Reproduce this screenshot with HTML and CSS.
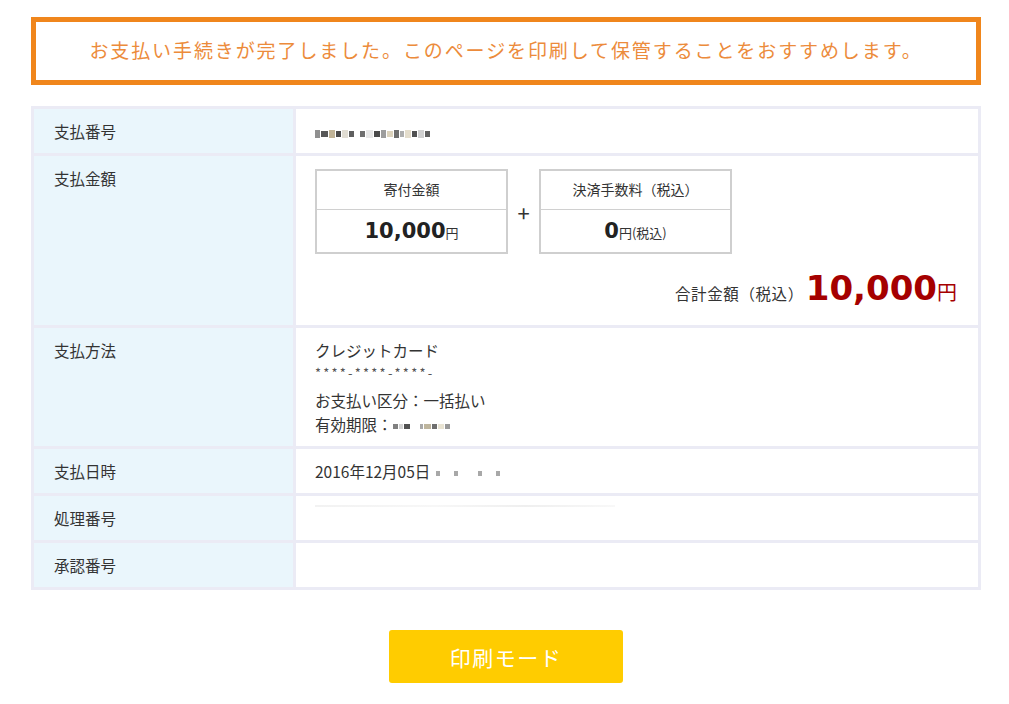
FILE: index.html
```html
<!DOCTYPE html>
<html lang="ja">
<head>
<meta charset="utf-8">
<title>お支払い完了</title>
<link rel="stylesheet" href="styles.css">
</head>
<body>
<main class="page">
  <p class="notice">お支払い手続きが完了しました。このページを印刷して保管することをおすすめします。</p>

  <div class="detail">
    <div class="label">支払番号</div>
    <div class="value">
      <span class="masked">
        <i style="background:#7d7d7d"></i><i style="background:#3a3a3a;width:7px"></i><i style="background:#b7a785;width:6px"></i><i style="background:#2c2c2c"></i><i style="background:#dcd8cc;width:6px"></i><i style="background:#444"></i><i style="background:#fff;width:4px"></i><i style="background:#555"></i><i style="background:#e3e3e3;width:7px"></i><i style="background:#2a2a2a;width:6px"></i><i style="background:#8c8c8c"></i><i style="background:#d6ccb2;width:6px"></i><i style="background:#555"></i><i style="background:#a0a0a0;width:4px"></i><i style="background:#e0d8c4;width:6px"></i><i style="background:#333"></i><i style="background:#c8c8c8;width:6px"></i><i style="background:#444"></i>
      </span>
    </div>

    <div class="label">支払金額</div>
    <div class="value">
      <div class="breakdown">
        <div class="amount-box">
          <div class="amount-head">寄付金額</div>
          <div class="amount-body"><b class="num">10,000</b><span class="yen">円</span></div>
        </div>
        <span class="plus">+</span>
        <div class="amount-box">
          <div class="amount-head">決済手数料（税込）</div>
          <div class="amount-body"><b class="num">0</b><span class="yen">円(税込)</span></div>
        </div>
      </div>
      <div class="total">
        <span class="total-label">合計金額（税込）</span><b class="total-num">10,000</b><span class="total-yen">円</span>
      </div>
    </div>

    <div class="label">支払方法</div>
    <div class="value method">
      <div>クレジットカード</div>
      <div class="card-no">****-****-****-</div>
      <div class="gap">お支払い区分：一括払い</div>
      <div>有効期限：<span class="masked small"><i style="background:#6a6a6a"></i><i style="background:#ccc;width:4px"></i><i style="background:#333;width:6px"></i><i style="background:#fff;width:8px"></i><i style="background:#999;width:3px"></i><i style="background:#b3a98c;width:7px"></i><i style="background:#555"></i><i style="background:#e6e0cc;width:6px"></i><i style="background:#888"></i></span></div>
    </div>

    <div class="label">支払日時</div>
    <div class="value">2016年12月05日 <span class="masked small dots"><i></i><i></i><i></i><i></i></span></div>

    <div class="label">処理番号</div>
    <div class="value"><span class="faint"></span></div>

    <div class="label">承認番号</div>
    <div class="value"></div>
  </div>

  <div class="actions">
    <button class="print-btn" type="button">印刷モード</button>
  </div>
</main>
</body>
</html>
```

FILE: styles.css
```css
* {
  box-sizing: border-box;
}

body {
  margin: 0;
  background: #fff;
  color: #333;
  font-family: "Noto Sans CJK JP", "Noto Sans", sans-serif;
}

.page {
  width: 950px;
  margin-left: 31px;
  padding-top: 17px;
}

/* completion message */
.notice {
  margin: 0;
  height: 68px;
  border: 5px solid #f0861c;
  color: #ec8b3b;
  font-size: 19px;
  letter-spacing: 1.9px;
  line-height: 56px;
  text-align: center;
}

/* payment detail table */
.detail {
  margin-top: 21px;
  display: grid;
  grid-template-columns: 259px 1fr;
  gap: 3px;
  padding: 3px;
  background: #ebebf5;
}

.label {
  background: #eaf6fc;
  padding: 10px 20px;
  font-size: 15.5px;
  line-height: 24px;
}

.value {
  background: #fff;
  padding: 10px 19px;
  font-size: 15.5px;
  line-height: 24px;
  min-height: 44px;
}

.masked {
  display: inline-flex;
  align-items: center;
  height: 10px;
  vertical-align: middle;
  opacity: 0.85;
}

.masked i {
  display: block;
  width: 5px;
  height: 6px;
  margin-right: 1px;
}

.masked i:nth-child(odd) {
  height: 8px;
}

.masked.small i {
  height: 5px;
}

.dots {
  margin-left: 2px;
}

.dots i {
  width: 4px;
  height: 5px;
  margin-right: 14px;
  background: #9a9a9a;
}

.dots i:nth-child(2) {
  margin-right: 20px;
}

.faint {
  display: block;
  width: 300px;
  height: 2px;
  margin-top: -1px;
  background: linear-gradient(90deg, #f2f2f2, #f7f7f7 40%, #efefef 70%, #f8f8f8);
}

/* amount breakdown */
.breakdown {
  display: flex;
  align-items: center;
  margin-top: 3px;
}

.amount-box {
  width: 193px;
  border: 2px solid #cfcfcf;
  text-align: center;
}

.amount-head {
  height: 39px;
  line-height: 36px;
  font-size: 14px;
  border-bottom: 1px solid #d0d0d0;
}

.amount-body {
  height: 42px;
  line-height: 42px;
}

.num {
  font-family: "DejaVu Sans", "Noto Sans CJK JP", sans-serif;
  font-weight: bold;
  font-size: 21px;
  color: #222;
}

.yen {
  font-size: 13px;
}

.plus {
  width: 31px;
  text-align: center;
  font-size: 22px;
  line-height: 24px;
  color: #333;
}

.total {
  margin-top: 12px;
  text-align: right;
  padding-right: 2px;
  line-height: 44px;
}

.total-label {
  font-size: 15.5px;
  letter-spacing: 0.6px;
  margin-right: 2px;
}

.total-num {
  font-family: "DejaVu Sans", "Noto Sans CJK JP", sans-serif;
  font-weight: bold;
  font-size: 34px;
  color: #a50000;
}

.total-yen {
  font-size: 20px;
  color: #a50000;
}

/* payment method lines */
.method div {
  line-height: 24px;
}

.method .card-no {
  font-size: 13px;
  line-height: 21px;
  letter-spacing: 2.2px;
  color: #555;
}

.method .gap {
  margin-top: 5px;
}

/* print button */
.actions {
  display: flex;
  justify-content: center;
  padding-top: 40px;
}

.print-btn {
  width: 234px;
  height: 53px;
  border: 0;
  border-radius: 3px;
  background: #ffcc00;
  color: #fff;
  font-family: "Noto Sans CJK JP", sans-serif;
  font-size: 21px;
  letter-spacing: 1.5px;
  cursor: pointer;
}
```
